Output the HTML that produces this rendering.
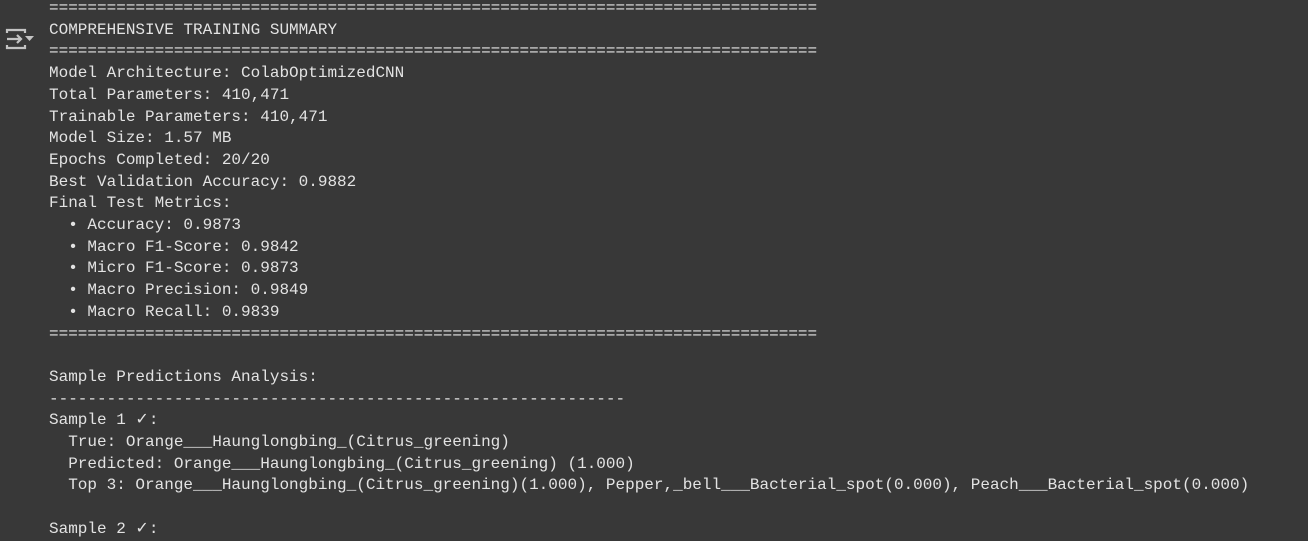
<!DOCTYPE html>
<html><head><style>
html,body{margin:0;padding:0;background:#383838;width:1308px;height:533px;overflow:hidden}
pre{position:absolute;left:49px;top:-2px;margin:0;font-family:"Liberation Mono",monospace;font-size:16px;line-height:21.7px;color:#e3e3e3;white-space:pre}
svg{position:absolute;left:4px;top:27px}
</style></head><body>
<svg width="32" height="26" viewBox="0 0 32 26"><g fill="none" stroke="#c4c4c4" stroke-width="2.2"><path d="M3 6V3h18v3"/><path d="M3 18v3h18v-3"/><path d="M3 12h14M13 8l4 4-4 4"/></g><path d="M21 9h9l-4.5 5z" fill="#c4c4c4"/></svg>
<pre>================================================================================
COMPREHENSIVE TRAINING SUMMARY
================================================================================
Model Architecture: ColabOptimizedCNN
Total Parameters: 410,471
Trainable Parameters: 410,471
Model Size: 1.57 MB
Epochs Completed: 20/20
Best Validation Accuracy: 0.9882
Final Test Metrics:
  • Accuracy: 0.9873
  • Macro F1-Score: 0.9842
  • Micro F1-Score: 0.9873
  • Macro Precision: 0.9849
  • Macro Recall: 0.9839
================================================================================

Sample Predictions Analysis:
------------------------------------------------------------
Sample 1 ✓:
  True: Orange___Haunglongbing_(Citrus_greening)
  Predicted: Orange___Haunglongbing_(Citrus_greening) (1.000)
  Top 3: Orange___Haunglongbing_(Citrus_greening)(1.000), Pepper,_bell___Bacterial_spot(0.000), Peach___Bacterial_spot(0.000)

Sample 2 ✓:</pre>
</body></html>
